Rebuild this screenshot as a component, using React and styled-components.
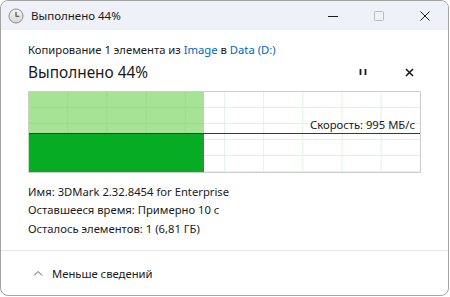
import styled, { createGlobalStyle } from 'styled-components';

const GlobalStyle = createGlobalStyle`
    html, body {
        margin: 0;
        padding: 0;
        background: #ffffff;
    }
    body {
        font-family: "Noto Sans", "Liberation Sans", sans-serif;
        color: #1a1a1a;
    }
`;

const Window = styled.div`
    box-sizing: border-box;
    width: 449px;
    height: 296px;
    border: 1px solid #a3a3a3;
    border-radius: 8px;
    overflow: hidden;
    display: flex;
    flex-direction: column;
    background: #ffffff;
`;

const TitleBar = styled.div`
    height: 29px;
    background: #eef1f8;
    display: flex;
    align-items: center;
    padding-left: 7px;
    font-size: 11.5px;
`;

const TitleText = styled.span`
    margin-left: 7px;
    flex: 1;
`;

const CaptionButton = styled.div`
    width: 46px;
    height: 29px;
    display: flex;
    align-items: center;
    justify-content: center;
`;

const Content = styled.div`
    flex: 1;
    padding: 12px 27px 0 27px;
    display: flex;
    flex-direction: column;
`;

const CopyLine = styled.div`
    font-size: 11.25px;
    line-height: 16px;
`;

const Link = styled.span`
    color: #0067c0;
`;

const HeadRow = styled.div`
    display: flex;
    align-items: center;
    height: 24px;
    margin-top: 2px;
`;

const Heading = styled.div`
    flex: 1;
    font-size: 15.4px;
`;

const IconButton = styled.div`
    width: 24px;
    height: 24px;
    display: flex;
    align-items: center;
    justify-content: center;
    margin-left: ${({ gap }) => gap || 0}px;
`;

const Graph = styled.div`
    position: relative;
    margin-top: 7px;
    height: 80px;
    border: 1px solid #cdcdcd;
    background-color: #ffffff;
    background-image:
        linear-gradient(to right, #ddf5e1 1px, transparent 1px),
        linear-gradient(to bottom, #ddf5e1 1px, transparent 1px);
    background-size: 39.2px 16px;
    background-position: -1px -1px;
`;

const Progress = styled.div`
    position: absolute;
    left: 0;
    top: 0;
    bottom: 0;
    background: rgba(107, 208, 77, 0.6);
`;

const SpeedArea = styled.div`
    position: absolute;
    left: 0;
    bottom: 0;
    height: 38px;
    background: #06ad24;
`;

const SpeedLine = styled.div`
    position: absolute;
    left: 0;
    right: 0;
    top: 41px;
    height: 1px;
    background: #3a3a3a;
`;

const SpeedLabel = styled.div`
    position: absolute;
    right: 5px;
    top: 25px;
    font-size: 11.25px;
    line-height: 16px;
    color: #1a1a1a;
`;

const Details = styled.div`
    margin-top: 10px;
    font-size: 11.25px;
    line-height: 18.3px;
`;

const Label = styled.span`
    margin-right: 3px;
`;

const Footer = styled.div`
    height: 44px;
    border-top: 1px solid #e5e5e5;
    display: flex;
    align-items: center;
    padding-left: 32px;
    font-size: 11.25px;
`;

const FooterText = styled.span`
    margin-left: 9px;
`;

const ClockIcon = () => (
    <svg width="16" height="16" viewBox="0 0 16 16">
        <defs>
            <linearGradient id="clk" x1="0" y1="0" x2="0" y2="1">
                <stop offset="0" stopColor="#f4f4f4" />
                <stop offset="1" stopColor="#d6d6d6" />
            </linearGradient>
        </defs>
        <circle cx="8" cy="8" r="7" fill="url(#clk)" stroke="#8c8c8c" strokeWidth="1" />
        <path d="M8 4.2 V8.3 H10.8" fill="none" stroke="#3c3c3c" strokeWidth="1.1" strokeLinecap="round" />
    </svg>
);

const details = [
    ['Имя:', '3DMark 2.32.8454 for Enterprise'],
    ['Оставшееся время:', 'Примерно 10 с'],
    ['Осталось элементов:', '1 (6,81 ГБ)'],
];

const App = () => {
    const percent = 44.8;
    return (
        <>
            <GlobalStyle />
            <Window>
                <TitleBar>
                    <ClockIcon />
                    <TitleText>Выполнено 44%</TitleText>
                    <CaptionButton>
                        <svg width="10" height="10" viewBox="0 0 10 10">
                            <path d="M0 5.5 H10" stroke="#1a1a1a" strokeWidth="1" />
                        </svg>
                    </CaptionButton>
                    <CaptionButton>
                        <svg width="10" height="10" viewBox="0 0 10 10">
                            <rect x="0.5" y="0.5" width="9" height="9" rx="1" fill="none" stroke="#bdbdbd" strokeWidth="1" />
                        </svg>
                    </CaptionButton>
                    <CaptionButton>
                        <svg width="10" height="10" viewBox="0 0 10 10">
                            <path d="M0.5 0.5 L9.5 9.5 M9.5 0.5 L0.5 9.5" stroke="#1a1a1a" strokeWidth="1" />
                        </svg>
                    </CaptionButton>
                </TitleBar>
                <Content>
                    <CopyLine>
                        Копирование 1 элемента из <Link>Image</Link> в <Link>Data (D:)</Link>
                    </CopyLine>
                    <HeadRow>
                        <Heading>Выполнено 44%</Heading>
                        <IconButton>
                            <svg width="8" height="8" viewBox="0 0 8 8">
                                <path d="M1.5 1 V7 M6.5 1 V7" stroke="#1a1a1a" strokeWidth="1.8" />
                            </svg>
                        </IconButton>
                        <IconButton gap={22}>
                            <svg width="9" height="9" viewBox="0 0 9 9">
                                <path d="M1 1 L8 8 M8 1 L1 8" stroke="#1a1a1a" strokeWidth="1.6" />
                            </svg>
                        </IconButton>
                    </HeadRow>
                    <Graph>
                        <Progress style={{ width: `${percent}%` }} />
                        <SpeedArea style={{ width: `${percent}%` }} />
                        <SpeedLine />
                        <SpeedLabel>Скорость: 995 МБ/с</SpeedLabel>
                    </Graph>
                    <Details>
                        {details.map(([label, value]) => (
                            <div key={label}>
                                <Label>{label}</Label>
                                {value}
                            </div>
                        ))}
                    </Details>
                </Content>
                <Footer>
                    <svg width="10" height="6" viewBox="0 0 10 6">
                        <path d="M1 5.5 L5 1.5 L9 5.5" fill="none" stroke="#5a5a5a" strokeWidth="1" />
                    </svg>
                    <FooterText>Меньше сведений</FooterText>
                </Footer>
            </Window>
        </>
    );
};

export default App;
